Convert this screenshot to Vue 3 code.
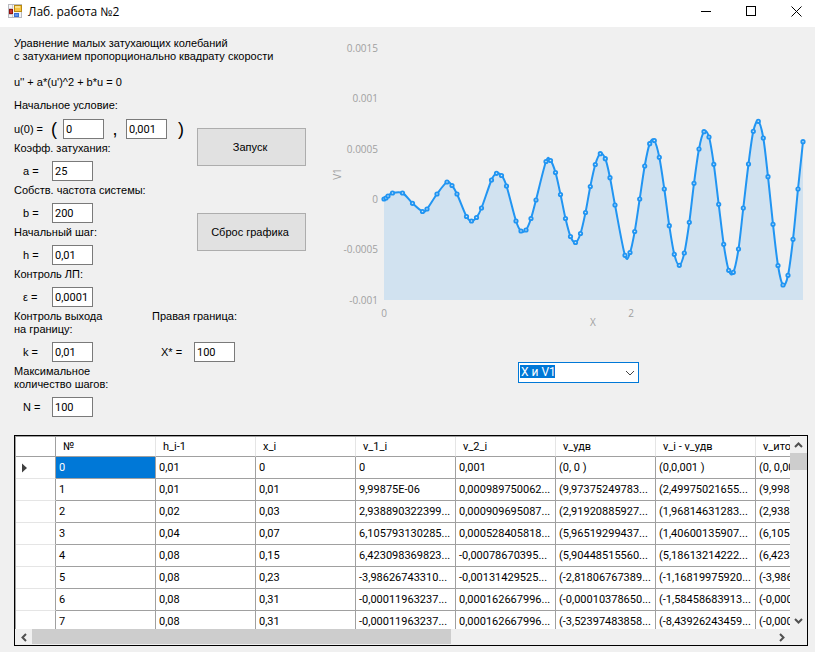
<script setup>
import { ref } from 'vue'

const start = ref({ x: '0', v: '0,001' })
const fields = ref([
  { id: 'damping', title: 'Коэфф. затухания:', symbol: 'a =', value: '25' },
  { id: 'frequency', title: 'Собств. частота системы:', symbol: 'b =', value: '200' },
  { id: 'step', title: 'Начальный шаг:', symbol: 'h =', value: '0,01' },
  { id: 'tolerance', title: 'Контроль ЛП:', symbol: 'ε =', value: '0,0001' },
  { id: 'edge', title: 'Контроль выхода\nна границу:', symbol: 'k =', value: '0,01' },
  { id: 'limit', title: 'Максимальное\nколичество шагов:', symbol: 'N =', value: '100' },
  { id: 'right', title: 'Правая граница:', symbol: 'X* =', value: '100' },
])

const plot = ref('X и V1')

const columns = ['№', 'h_i-1', 'x_i', 'v_1_i', 'v_2_i', 'v_удв', 'v_i - v_удв', 'v_итог']
const rows = [
  ['0', '0,01', '0', '0', '0,001', '(0, 0 )', '(0,0,001 )', '(0, 0,001 )'],
  ['1', '0,01', '0,01', '9,99875E-06', '0,000989750062...', '(9,97375249783...', '(2,49975021655...', '(9,99875E-06...'],
  ['2', '0,02', '0,03', '2,938890322399...', '0,000909695087...', '(2,91920885927...', '(1,96814631283...', '(2,93889032239...'],
  ['3', '0,04', '0,07', '6,105793130285...', '0,000528405818...', '(5,96519299437...', '(1,40600135907...', '(6,10579313028...'],
  ['4', '0,08', '0,15', '6,423098369823...', '-0,00078670395...', '(5,90448515560...', '(5,18613214222...', '(6,42309836982...'],
  ['5', '0,08', '0,23', '-3,98626743310...', '-0,00131429525...', '(-2,81806767389...', '(-1,16819975920...', '(-3,98626743310...'],
  ['6', '0,08', '0,31', '-0,00011963237...', '0,000162667996...', '(-0,00010378650...', '(-1,58458683913...', '(-0,00011963237...'],
  ['7', '0,08', '0,31', '-0,00011963237...', '0,000162667996...', '(-3,52397483858...', '(-8,43926243459...', '(-0,00011963237...'],
]

const points = [
  [384, 199], [386, 198], [388, 196], [392.5, 193], [402.5, 193], [412.5, 203.3], [422.5, 211.5], [427, 209],
  [437, 194], [447, 182], [452, 185.5], [457, 194], [466.5, 216.5], [471.5, 221], [476.5, 217.5], [481.5, 208],
  [491.5, 180], [496.5, 173.3], [501.5, 175.5], [506.5, 186], [516, 221], [521, 231], [526, 230], [531, 218.5],
  [536, 200], [546, 161.5], [550.5, 160.5], [555.5, 172.5], [560.5, 194.5], [565.5, 218.5], [570.5, 236.5],
  [575.5, 242.5], [580.5, 233.5], [585.5, 212.5], [590.3, 186.5], [595.3, 164.5], [600.3, 153.7], [605.3, 158.7],
  [610, 177.7], [615, 205], [625, 255.3], [630, 252.5], [634.7, 231.5], [639.7, 199], [644.7, 166], [649.7, 143.7],
  [654.3, 140.5], [659.3, 157.3], [664.3, 189], [669.3, 225.7], [674.3, 254.3], [679.3, 265.3], [684.3, 253],
  [689.3, 222.3], [694, 183.3], [699, 149], [704, 131.7], [709, 137], [713.8, 164.3], [718.7, 204.3],
  [723.7, 244.3], [728.7, 270.3], [733.3, 272.3], [738.5, 249], [743.3, 208], [748.5, 164], [753.3, 131.3],
  [758.3, 121.3], [763.3, 138], [768, 176.7], [773, 224.3], [778, 265.5], [783, 285], [788, 275.3], [793, 239.3],
  [798, 189], [803, 141.7],
]

// Smooth curve through every sample (Catmull-Rom converted to Bezier segments)
function smooth(p) {
  let d = `M${p[0]}`
  for (let i = 0; i < p.length - 1; i++) {
    const a = p[i - 1] || p[i]
    const b = p[i]
    const c = p[i + 1]
    const e = p[i + 2] || c
    d += `C${b[0] + (c[0] - a[0]) / 6},${b[1] + (c[1] - a[1]) / 6} ${c[0] - (e[0] - b[0]) / 6},${c[1] - (e[1] - b[1]) / 6} ${c}`
  }
  return d
}
const line = smooth(points)
const area = `${line}L803,300L384,300Z`

const yTicks = [
  ['0.0015', 48], ['0.001', 98], ['0.0005', 149], ['0', 199], ['-0.0005', 249], ['-0.001', 300],
]
const areas = ['a', 'b', 'c', 'd', 'edge', 'limit', 'right']
</script>

<template>
  <div class="window">
    <header class="titlebar">
      <svg class="app-icon" width="15" height="15" viewBox="0 0 15 15" aria-hidden="true">
        <rect x="0.5" y="0.5" width="13" height="13" fill="#f4f4f6" stroke="#b9bac0" />
        <path d="M4.5 1V5M1 4.5H5M4.5 10V13M1 10.500H5" stroke="#c9cad0" fill="none" />
        <rect x="6.500" y="1.500" width="7" height="6" fill="#f6c544" stroke="#b98a10" />
        <rect x="7" y="2" width="5" height="2" fill="#fbe08a" />
        <rect x="1.500" y="5.500" width="3" height="4" fill="#c8352c" stroke="#92140f" />
        <rect x="6.500" y="9.500" width="4" height="3" fill="#5f93ea" stroke="#3a6fd0" />
      </svg>
      <h1>Лаб. работа №2</h1>
      <div class="window-buttons">
        <button type="button" aria-label="Свернуть">
          <svg width="11" height="11" viewBox="0 0 11 11"><path d="M0 5.500H10" stroke="#000" /></svg>
        </button>
        <button type="button" aria-label="Развернуть">
          <svg width="11" height="11" viewBox="0 0 11 11"><rect x="0.500" y="0.500" width="9" height="9" fill="none" stroke="#000" /></svg>
        </button>
        <button type="button" aria-label="Закрыть">
          <svg width="11" height="11" viewBox="0 0 11 11"><path d="M0.500 0.500L10.500 10.500M10.500 0.500L0.500 10.500" stroke="#000" /></svg>
        </button>
      </div>
    </header>

    <main class="content">
      <div class="top">
        <form class="params" @submit.prevent>
          <p class="intro">Уравнение малых затухающих колебаний<br />с затуханием пропорционально квадрату скорости</p>
          <p class="equation">u'' + a*(u')^2 + b*u = 0</p>
          <div class="grid">
            <fieldset class="start">
              <legend>Начальное условие:</legend>
              <div class="pair">
                <label class="u0" for="start-x">u(0) =</label>
                <span class="bracket open">(</span>
                <input id="start-x" v-model="start.x" type="text" />
                <span class="bracket comma">,</span>
                <input v-model="start.v" type="text" aria-label="u'(0)" />
                <span class="bracket close">)</span>
              </div>
            </fieldset>
            <div v-for="(f, i) in fields" :key="f.id" class="field" :class="`area-${areas[i]}`">
              <label :for="f.id">{{ f.title }}</label>
              <div class="entry">
                <span class="symbol">{{ f.symbol }}</span>
                <input :id="f.id" v-model="f.value" type="text" />
              </div>
            </div>
            <div class="actions">
              <button type="button">Запуск</button>
              <button type="button">Сброс графика</button>
            </div>
          </div>
        </form>

        <section class="chart">
          <svg class="plot" viewBox="320 27 495 309" role="img" aria-label="V1">
            <path :d="area" fill="#2195f2" fill-opacity="0.15" />
            <path :d="line" fill="none" stroke="#2195f2" stroke-width="2" />
            <circle v-for="(p, i) in points" :key="i" :cx="p[0]" :cy="p[1]" r="1.700" fill="#d3e5f3" stroke="#2195f2" stroke-width="1.800" />
            <text v-for="t in yTicks" :key="t[0]" x="378" :y="t[1] + 4" text-anchor="end">{{ t[0] }}</text>
            <text x="384" y="317" text-anchor="middle">0</text>
            <text x="631" y="317" text-anchor="middle">2</text>
            <text x="593" y="326" text-anchor="middle">X</text>
            <text transform="translate(341 174) rotate(-90)" text-anchor="middle">V1</text>
          </svg>
          <div class="combo">
            <select v-model="plot" aria-label="График">
              <option>X и V1</option>
              <option>X и V2</option>
              <option>V1 и V2</option>
            </select>
            <svg class="chevron" width="10" height="6" viewBox="0 0 10 6" aria-hidden="true"><path d="M1 1L5 5L9 1" fill="none" stroke="#444" /></svg>
          </div>
        </section>
      </div>

      <section class="data">
        <div class="viewport">
          <table>
            <thead>
              <tr>
                <th class="row-head"></th>
                <th v-for="c in columns" :key="c" scope="col">{{ c }}</th>
              </tr>
            </thead>
            <tbody>
              <tr v-for="(r, i) in rows" :key="i">
                <th class="row-head" scope="row">
                  <svg v-if="i === 0" width="5" height="10" viewBox="0 0 5 10"><path d="M0 0.500L5 5L0 9.500Z" fill="#404040" /></svg>
                </th>
                <td v-for="(v, j) in r" :key="j" :class="{ selected: i === 0 && j === 0 }">{{ v }}</td>
              </tr>
            </tbody>
          </table>
        </div>
        <div class="vbar">
          <button type="button" aria-label="Вверх"><svg width="9" height="6" viewBox="0 0 9 6"><path d="M1 5L4.500 1.500L8 5" /></svg></button>
          <div class="track"><div class="thumb"></div></div>
          <button type="button" aria-label="Вниз"><svg width="9" height="6" viewBox="0 0 9 6"><path d="M1 1L4.500 4.500L8 1" /></svg></button>
        </div>
        <div class="hbar">
          <button type="button" aria-label="Влево"><svg width="6" height="9" viewBox="0 0 6 9"><path d="M5 1L1.500 4.500L5 8" /></svg></button>
          <div class="track"><div class="thumb"></div></div>
          <button type="button" aria-label="Вправо"><svg width="6" height="9" viewBox="0 0 6 9"><path d="M1 1L4.500 4.500L1 8" /></svg></button>
        </div>
      </section>
    </main>
  </div>
</template>

<style>
body {
  margin: 0;
  background: #f0f0f0;
}
</style>

<style scoped>
.window {
  font: 11px/13px "Liberation Sans", sans-serif;
  color: #000;
  background: #f0f0f0;
}
.window * {
  box-sizing: border-box;
}
.titlebar {
  display: flex;
  align-items: center;
  height: 27px;
  padding: 0 5px 4px 8px;
  background: #fff;
}
h1 {
  margin: 0 auto 0 5px;
  font: 12px/16px "Open Sans", sans-serif;
}
.window-buttons {
  display: flex;
  gap: 17px;
}
.window-buttons button {
  display: grid;
  place-items: center;
  width: 28px;
  height: 22px;
  padding: 0;
  border: 0;
  background: none;
}
.content {
  padding-bottom: 6px;
}
.top {
  display: flex;
}
.params {
  flex: none;
  width: 320px;
  padding: 10px 14px 0;
}
p {
  margin: 0;
}
.equation {
  margin: 13px 0 10px;
}
.grid {
  display: grid;
  grid-template-columns: 138px 45px 109px;
  grid-template-areas:
    "start start actions"
    "a a actions"
    "b b actions"
    "c c actions"
    "d d ."
    "edge right right"
    "limit . .";
  row-gap: 3px;
}
.start {
  grid-area: start;
  min-width: 0;
  margin: 0;
  padding: 0;
  border: 0;
}
legend {
  padding: 0;
}
.pair {
  display: flex;
  align-items: center;
  margin-top: 7px;
}
.u0 {
  width: 37px;
}
.bracket {
  width: 22px;
  font-size: 18px;
  line-height: 20px;
  text-align: center;
}
.open {
  width: 12px;
  text-align: left;
}
.close {
  text-align: right;
  width: 17px;
}
.field {
  display: flex;
  flex-direction: column;
  justify-content: space-between;
  gap: 6px;
  white-space: pre-line;
}
.area-a { grid-area: a; }
.area-b { grid-area: b; }
.area-c { grid-area: c; }
.area-d { grid-area: d; }
.area-edge { grid-area: edge; }
.area-limit { grid-area: limit; }
.area-right { grid-area: right; }
.entry {
  display: flex;
  align-items: center;
}
.symbol {
  width: 38px;
  padding-left: 9px;
}
.area-right .symbol {
  width: 42px;
}
input {
  width: 41px;
  height: 20px;
  padding: 0 2px;
  border: 1px solid #7a7a7a;
  background: #fff;
  font: 11px/13px Roboto, sans-serif;
  color: #000;
  outline: none;
}
.actions {
  grid-area: actions;
  display: flex;
  flex-direction: column;
  gap: 47px;
  padding-top: 29px;
}
.actions button {
  height: 38px;
  padding: 0 3px 0 0;
  border: 1px solid #adadad;
  background: #e1e1e1;
  font: inherit;
  color: #000;
}
.chart {
  flex: 1;
  min-width: 0;
}
.plot {
  display: block;
  width: 100%;
}
.plot text {
  font: 10px "Open Sans", sans-serif;
  fill: #a0a0a0;
}
.combo {
  position: relative;
  width: 121px;
  margin: 26px 0 0 40%;
}
select {
  display: block;
  width: 100%;
  height: 21px;
  padding: 0 2px 2px;
  border: 1px solid #0078d7;
  border-radius: 0;
  appearance: none;
  background: linear-gradient(#0078d7, #0078d7) 1px 2px / 35px 13px no-repeat #fff;
  font: 12px/16px Roboto, sans-serif;
  color: #fff;
  outline: none;
}
option {
  color: #000;
}
.chevron {
  position: absolute;
  top: 8px;
  right: 4px;
  pointer-events: none;
}
.data {
  display: grid;
  grid-template-columns: minmax(0, 1fr) 17px;
  margin: 18px 7px 0 14px;
  border: 1px solid #000;
}
.viewport {
  height: 193px;
  overflow: hidden;
  border-left: 1px solid #a0a0a0;
  border-top: 1px solid #a0a0a0;
  background: #fff;
}
table {
  width: 840px;
  table-layout: fixed;
  border-collapse: separate;
  border-spacing: 0;
  font: 11px/13px Roboto, sans-serif;
}
th,
td {
  width: 100px;
  height: 22px;
  padding: 0 3px;
  border-right: 1px solid #a0a0a0;
  border-bottom: 1px solid #a0a0a0;
  font-weight: 400;
  text-align: left;
  white-space: nowrap;
}
thead th {
  height: 20px;
  padding: 0 7px;
  border-right-color: #e5e5e5;
}
.row-head,
thead .row-head {
  width: 40px;
  padding: 0 6px;
  border-right-color: #a0a0a0;
}
tbody .row-head {
  border-bottom-color: #e5e5e5;
}
.row-head svg {
  display: block;
}
.selected {
  background: #0078d7;
  color: #fff;
}
.vbar,
.hbar {
  display: flex;
  background: #f0f0f0;
}
.vbar {
  flex-direction: column;
}
.hbar {
  grid-column: 1 / -1;
  height: 16px;
  padding-right: 17px;
}
.vbar button,
.hbar button {
  display: grid;
  place-items: center;
  flex: none;
  width: 17px;
  height: 17px;
  padding: 0;
  border: 0;
  background: none;
}
.vbar path,
.hbar path {
  fill: none;
  stroke: #505050;
  stroke-width: 2;
}
.hbar button {
  height: 16px;
}
.track {
  flex: 1;
}
.thumb {
  background: #cdcdcd;
}
.vbar .thumb {
  height: 17px;
}
.hbar .thumb {
  width: 56.5%;
  height: 15px;
}
</style>
